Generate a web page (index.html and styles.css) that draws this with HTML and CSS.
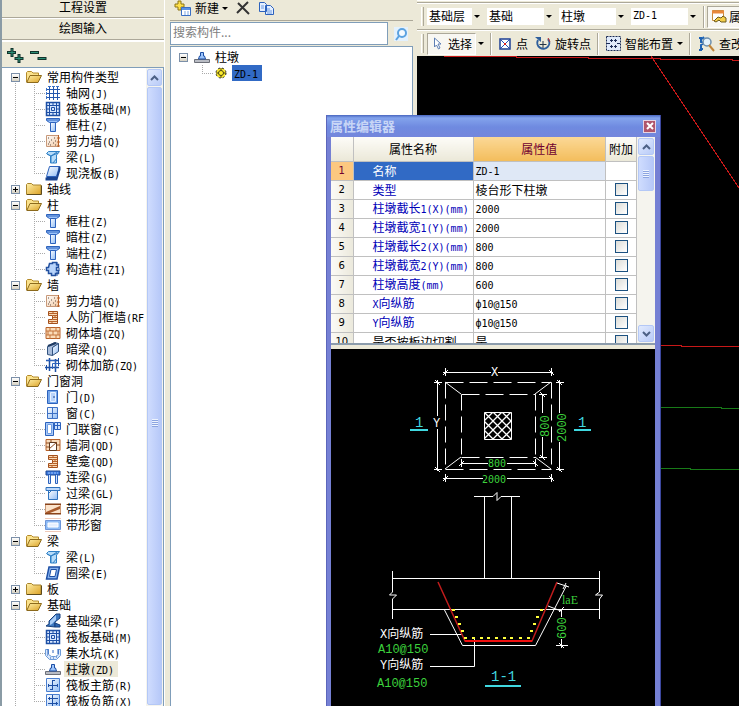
FILE: index.html
```html
<!DOCTYPE html>
<html lang="zh-CN">
<head>
    <meta charset="UTF-8">
    <meta name="viewport" content="width=device-width, initial-scale=1.0">
    <title>绘图输入</title>
    <link rel="stylesheet" href="styles.css">
</head>
<body>

    <!-- icon set -->
    <svg class="defs" aria-hidden="true">
        <defs>
            <linearGradient id="gBlue" x1="0" y1="0" x2="1" y2="1">
                <stop offset="0" stop-color="#fff"/><stop offset="1" stop-color="#8fbcf5"/>
            </linearGradient>
            <linearGradient id="gGold" x1="0" y1="0" x2="1" y2="1">
                <stop offset="0" stop-color="#fff0a8"/><stop offset="1" stop-color="#dca226"/>
            </linearGradient>
            <linearGradient id="gClay" x1="0" y1="0" x2="1" y2="1">
                <stop offset="0" stop-color="#fff"/><stop offset="1" stop-color="#f3c8a0"/>
            </linearGradient>
        </defs>
        <symbol id="folder" viewBox="0 0 16 16">
            <path d="M.5 13.500V3.500l1-1h4l1.500 1.500h8v9.500z" fill="url(#gGold)" stroke="#a8842c"/>
            <path d="M1 13.500h14.500V4.500" fill="none" stroke="#5d4a1c"/>
        </symbol>
        <symbol id="open" viewBox="0 0 16 16">
            <path d="M.5 13V3.500l1-1h4L7 4h5.500v3" fill="#fbe28c" stroke="#b48a2a"/>
            <path d="M.8 13.500L4 6.500h11.500l-3.500 7z" fill="url(#gGold)" stroke="#8c6a1c"/>
        </symbol>
        <symbol id="grid" viewBox="0 0 16 16">
            <path d="M4.500 1v14M8.500 1v14M12.500 1v14M1 4.500h14M1 8.500h14M1 12.500h14" stroke="#2457ad" fill="none"/>
            <path d="M3 1.500h3M7 1.500h3M11 1.500h3M1.500 3v3M1.500 7v3M1.500 11v3" stroke="#3d73c8" fill="none"/>
        </symbol>
        <symbol id="raft" viewBox="0 0 16 16">
            <path d="M1.500 1.500h13v13h-13z" fill="#d8e8ff" stroke="#1d4fa5" stroke-width="1.500"/>
            <path d="M4.500 2v12M11.500 2v12M2 4.500h12M2 11.500h12M6.500 6.500h3v3h-3z" stroke="#1d4fa5" fill="none"/>
            <path d="M8 2v2M8 12v2M2 8h2M12 8h2" stroke="#1d4fa5"/>
        </symbol>
        <symbol id="column" viewBox="0 0 16 16">
            <path d="M1.500 1.500h13v2l-3 2h-7l-3-2z" fill="#9cc4fa" stroke="#2c62bd"/>
            <path d="M5.500 5.500h5v9h-5z" fill="url(#gBlue)" stroke="#2c62bd"/>
            <path d="M2 3h12" stroke="#2c62bd"/>
        </symbol>
        <symbol id="wall" viewBox="0 0 16 16">
            <path d="M1.500 2.500h12v11h-12z" fill="url(#gClay)" stroke="#c89878"/>
            <path d="M13.500 2v12M12 5h3M12 9h3M12 13h3" stroke="#b86028"/>
            <path d="M3 5h1M6 7h1M9 5h1M4 9h1M8 10h1M5 12h1M10 8h1M10 12h1M3 11h1" stroke="#5c4b40"/>
        </symbol>
        <symbol id="beam" viewBox="0 0 16 16">
            <path d="M1.500 4.500l2-2h11l-2 2.500-1 1v8h-6v-7z" fill="#b6dcfa" stroke="#2f80c5"/>
            <path d="M2 5l4 2 6-4M6 14V7l7-3M8 14l4-5" fill="none" stroke="#2f80c5"/>
        </symbol>
        <symbol id="slab" viewBox="0 0 16 16">
            <path d="M4.500 1.500h10l-3 10h-10z" fill="url(#gBlue)" stroke="#2c62bd"/>
            <path d="M1.500 12.500v2h10l3-10v-3M1.500 13h10" fill="none" stroke="#184492" stroke-width="2"/>
        </symbol>
        <symbol id="strcol" viewBox="0 0 16 16">
            <path d="M4.500 2.500h3v-1h4v2h2v3h-2v3h2v3h-3v2h-4v-2h-3v-3h-2v-3h2z" fill="#b8d4fb" stroke="#22509f" stroke-width="1.500"/>
            <path d="M12 1v4M14 7v3M12 11v4" stroke="#22509f"/>
        </symbol>
        <symbol id="niche" viewBox="0 0 16 16">
            <path d="M3.500 2.500h9v12h-9v-4h4v-4h-4z" fill="#f9d9b4" stroke="#a5501c"/>
            <path d="M4 4.500h8M8 6.500h4M8 8.500h4M8 10.500h4M4 12.500h8M8 3v2M10 6v3M7 12v2" stroke="#b8622a"/>
        </symbol>
        <symbol id="brick" viewBox="0 0 16 16">
            <path d="M1 2.500h14v11H1z" fill="#fbdcb8" stroke="#b8622a"/>
            <path d="M1 6h14M1 10h14M5 2v4M11 2v4M8 6v4M3 6v4M13 6v4M5 10v4M11 10v4" stroke="#c4743c"/>
        </symbol>
        <symbol id="hidden" viewBox="0 0 16 16">
            <path d="M2.500 5.500l7-4 4 1-6 4v8l-5-1z" fill="#a9bddb" stroke="#31527f"/>
            <path d="M7.500 6.500l6-4v8l-6 4z" fill="url(#gBlue)" stroke="#31527f"/>
            <path d="M3 5l8-3" stroke="#1f3b63" stroke-width="2"/>
        </symbol>
        <symbol id="rebar" viewBox="0 0 16 16">
            <path d="M1 3.500h13M0 10.500h14M4.500 1v13M10.500 2v13" stroke="#1d4fa5" stroke-width="1.500" fill="none"/>
            <path d="M1.500 3.500h9v8M7.500 12V6.500h8" fill="none" stroke="#2c62bd"/>
            <path d="M13.500 1v8M1.500 8v5" stroke="#1d4fa5"/>
        </symbol>
        <symbol id="door" viewBox="0 0 16 16">
            <path d="M2.500 1.500h10v13h-10z" fill="#75a6ea" stroke="#2c62bd"/>
            <path d="M5.500 3.500h5v9h-5z" fill="#b9d4fb" stroke="#e8f1ff"/>
            <path d="M8 8h2" stroke="#184492"/>
        </symbol>
        <symbol id="window" viewBox="0 0 16 16">
            <path d="M2.500 2.500h10v11h-10z" fill="url(#gBlue)" stroke="#3d70c4"/>
            <path d="M7.500 2v12M3 8.500h10" stroke="#3d70c4"/>
        </symbol>
        <symbol id="doorwin" viewBox="0 0 16 16">
            <path d="M.5 1.500h8v13h-8z" fill="#a9c9f7" stroke="#2c62bd"/>
            <path d="M2.500 3.500h4v9h-4z" fill="#fff" stroke="#6f9de2"/>
            <path d="M9.500 1.500h6v7h-6zM12.500 1v7M9 4.500h7" fill="#cfe3ff" stroke="#2c62bd"/>
        </symbol>
        <symbol id="hole" viewBox="0 0 16 16">
            <path d="M1 2.500h14v11H1z" fill="#f8dcbd" stroke="#b8622a"/>
            <path d="M4.500 5.500h7v8h-7z" fill="#fff" stroke="#5d3a20"/>
            <path d="M4 12l8-7M1 6h3M12 8h3M1 10h3M6 3v2" stroke="#8e4a1e"/>
        </symbol>
        <symbol id="link" viewBox="0 0 16 16">
            <path d="M1 2h14v4H1z" fill="#3d7ae0" stroke="#184492"/>
            <path d="M3.500 6v8.500h2V6M10.500 6v8.500h2V6" fill="#cfe3ff" stroke="#2c62bd"/>
            <path d="M3 4h10" stroke="#9cc4fa" stroke-dasharray="2 1"/>
        </symbol>
        <symbol id="lintel" viewBox="0 0 16 16">
            <path d="M1 2.500h14v3H1z" fill="#bcd8fb" stroke="#2f72bd"/>
            <path d="M3.500 5.500h9v9h-9z" fill="url(#gBlue)" stroke="#2f72bd"/>
            <path d="M3 9l4-4" stroke="#2f72bd"/>
        </symbol>
        <symbol id="striphole" viewBox="0 0 16 16">
            <path d="M0 3.500h16v9H0z" fill="#fbe3cb" stroke="#9c4c1c"/>
            <path d="M1 11l14-6v3L5 12H1z" fill="#a85a2c"/>
            <path d="M0 3h16M0 13h16" stroke="#7c3a14"/>
        </symbol>
        <symbol id="stripwin" viewBox="0 0 16 16">
            <path d="M.5 3.500h15v9H.5z" fill="#8fbcf5" stroke="#6c95d8"/>
            <path d="M3 6h10v4H3z" fill="#e6f0ff" stroke="#fff"/>
            <path d="M0 1.500h16M0 14.500h16" stroke="#efc9b8"/>
        </symbol>
        <symbol id="ring" viewBox="0 0 16 16">
            <path d="M4 2h10.500l-2.500 12H1.500z" fill="#86b2ee" stroke="#1d4fa5" stroke-width="1.500"/>
            <path d="M6 4.500h5.500l-1.500 7H4.500z" fill="#fff" stroke="#1d4fa5"/>
        </symbol>
        <symbol id="fbeam" viewBox="0 0 16 16">
            <path d="M1 13l3-2V8l7-7h4v4l-5 4v5z" fill="#3d78c0" stroke="#163f7d"/>
            <path d="M5 12V8l6-6v5l-4 4z" fill="#a9cdf7"/>
            <path d="M10 10l5 2v2h-5z" fill="#2d68b4" stroke="#163f7d"/>
        </symbol>
        <symbol id="pit" viewBox="0 0 16 16">
            <path d="M.5 4.500h3v5l3 2h4l3-2v-5h2v6l-4 4h-7l-4-4z" fill="#d9e7fb" stroke="#6f9cd8"/>
            <path d="M3 4v5M13 4v5M5 13h1M8 13h1M11 12h1M2 10h1M8 5v3" stroke="#2c62bd"/>
        </symbol>
        <symbol id="pier" viewBox="0 0 16 16">
            <path d="M.5 10.500h15v3H.5z" fill="#b9bcc4" stroke="#6c6f78"/>
            <path d="M4.500 10l1-3h1V3.500h3V7h1l1 3z" fill="#9cc4fa" stroke="#1d4fa5"/>
        </symbol>
        <symbol id="mainbar" viewBox="0 0 16 16">
            <path d="M1.500 1.500h13v13h-13z" fill="url(#gBlue)" stroke="#4a7fd0"/>
            <path d="M7.500 3v10M3 8.500h10M3.500 7v3M12.500 7v3M7 3.500h3M5 12.500h3" stroke="#1d4fa5" fill="none"/>
        </symbol>
        <symbol id="negbar" viewBox="0 0 16 16">
            <path d="M1.500 1.500h13v13h-13z" fill="url(#gBlue)" stroke="#4a7fd0"/>
            <path d="M7.500 2v12M3 5.500h10M3 10.500h10M4.500 4v3M11.500 9v3" stroke="#1d4fa5" fill="none"/>
        </symbol>
    </svg>

    <aside class="sidebar">
        <button class="bar">工程设置</button>
        <button class="bar second">绘图输入</button>
        <div class="tools">
            <button class="plain" aria-label="展开全部">
                <svg width="17" height="16" viewBox="0 0 17 16"><path d="M5 0v9M0 4.500h9M12 6v9M7.500 10.500h9" stroke="#12332c" stroke-width="3"/><path d="M5 1v7M1 4.500h7M12 7v7M8.500 10.500h7" stroke="#2b8f75"/></svg>
            </button>
            <button class="plain" aria-label="折叠全部">
                <svg width="17" height="16" viewBox="0 0 17 16"><path d="M0 4.500h9M7.500 10.500h9" stroke="#12332c" stroke-width="3"/><path d="M1 4.500h7M8.500 10.500h7" stroke="#2b8f75"/></svg>
            </button>
        </div>
        <div class="treebox">
            <ul class="tree">
                <li>
                    <div class="group"><button class="toggle" aria-label="折叠"></button><svg><use href="#open"/></svg>常用构件类型</div>
                    <ul>
                        <li><svg><use href="#grid"/></svg><span>轴网<i>(J)</i></span></li>
                        <li><svg><use href="#raft"/></svg><span>筏板基础<i>(M)</i></span></li>
                        <li><svg><use href="#column"/></svg><span>框柱<i>(Z)</i></span></li>
                        <li><svg><use href="#wall"/></svg><span>剪力墙<i>(Q)</i></span></li>
                        <li><svg><use href="#beam"/></svg><span>梁<i>(L)</i></span></li>
                        <li><svg><use href="#slab"/></svg><span>现浇板<i>(B)</i></span></li>
                    </ul>
                </li>
                <li>
                    <div class="group"><button class="toggle closed" aria-label="展开"></button><svg><use href="#folder"/></svg>轴线</div>
                </li>
                <li>
                    <div class="group"><button class="toggle" aria-label="折叠"></button><svg><use href="#open"/></svg>柱</div>
                    <ul>
                        <li><svg><use href="#column"/></svg><span>框柱<i>(Z)</i></span></li>
                        <li><svg><use href="#column"/></svg><span>暗柱<i>(Z)</i></span></li>
                        <li><svg><use href="#column"/></svg><span>端柱<i>(Z)</i></span></li>
                        <li><svg><use href="#strcol"/></svg><span>构造柱<i>(Z1)</i></span></li>
                    </ul>
                </li>
                <li>
                    <div class="group"><button class="toggle" aria-label="折叠"></button><svg><use href="#open"/></svg>墙</div>
                    <ul>
                        <li><svg><use href="#wall"/></svg><span>剪力墙<i>(Q)</i></span></li>
                        <li><svg><use href="#niche"/></svg><span>人防门框墙<i>(RF</i></span></li>
                        <li><svg><use href="#brick"/></svg><span>砌体墙<i>(ZQ)</i></span></li>
                        <li><svg><use href="#hidden"/></svg><span>暗梁<i>(Q)</i></span></li>
                        <li><svg><use href="#rebar"/></svg><span>砌体加筋<i>(ZQ)</i></span></li>
                    </ul>
                </li>
                <li>
                    <div class="group"><button class="toggle" aria-label="折叠"></button><svg><use href="#open"/></svg>门窗洞</div>
                    <ul>
                        <li><svg><use href="#door"/></svg><span>门<i>(D)</i></span></li>
                        <li><svg><use href="#window"/></svg><span>窗<i>(C)</i></span></li>
                        <li><svg><use href="#doorwin"/></svg><span>门联窗<i>(C)</i></span></li>
                        <li><svg><use href="#hole"/></svg><span>墙洞<i>(QD)</i></span></li>
                        <li><svg><use href="#niche"/></svg><span>壁龛<i>(QD)</i></span></li>
                        <li><svg><use href="#link"/></svg><span>连梁<i>(G)</i></span></li>
                        <li><svg><use href="#lintel"/></svg><span>过梁<i>(GL)</i></span></li>
                        <li><svg><use href="#striphole"/></svg><span>带形洞</span></li>
                        <li><svg><use href="#stripwin"/></svg><span>带形窗</span></li>
                    </ul>
                </li>
                <li>
                    <div class="group"><button class="toggle" aria-label="折叠"></button><svg><use href="#open"/></svg>梁</div>
                    <ul>
                        <li><svg><use href="#beam"/></svg><span>梁<i>(L)</i></span></li>
                        <li><svg><use href="#ring"/></svg><span>圈梁<i>(E)</i></span></li>
                    </ul>
                </li>
                <li>
                    <div class="group"><button class="toggle closed" aria-label="展开"></button><svg><use href="#folder"/></svg>板</div>
                </li>
                <li>
                    <div class="group"><button class="toggle" aria-label="折叠"></button><svg><use href="#open"/></svg>基础</div>
                    <ul>
                        <li><svg><use href="#fbeam"/></svg><span>基础梁<i>(F)</i></span></li>
                        <li><svg><use href="#raft"/></svg><span>筏板基础<i>(M)</i></span></li>
                        <li><svg><use href="#pit"/></svg><span>集水坑<i>(K)</i></span></li>
                        <li><svg><use href="#pier"/></svg><span class="current">柱墩<i>(ZD)</i></span></li>
                        <li><svg><use href="#mainbar"/></svg><span>筏板主筋<i>(R)</i></span></li>
                        <li><svg><use href="#negbar"/></svg><span>筏板负筋<i>(X)</i></span></li>
                    </ul>
                </li>
            </ul>
            <div class="scroll">
                <button class="arrow" aria-label="向上"><svg width="9" height="6" viewBox="0 0 9 6"><path d="M1 5l3.500-3.500L8 5" fill="none" stroke="#4d6185" stroke-width="2"/></svg></button>
                <div class="thumb tall"><div class="grip"></div></div>
            </div>
        </div>
    </aside>

    <section class="parts">
        <div class="newbar">
            <button class="plain">
                <svg width="18" height="17" viewBox="0 0 18 17"><path d="M4 1h3v3h3v3H7v3H4V7H1V4h3z" fill="#ffe14a" stroke="#8c7414"/><path d="M7.500 7.500h9v8h-9z" fill="#fff" stroke="#3a6fc4"/><path d="M8 9h8" stroke="#5a92e6" stroke-width="2"/><path d="M10 12h2M13 12h2M10 14h2M13 14h2" stroke="#7fa9e4"/></svg>
                新建<span class="caret"></span>
            </button>
            <button class="plain" aria-label="删除"><svg width="14" height="14" viewBox="0 0 14 14"><path d="M2 2l11 11M12 1L1 12" stroke="#333" stroke-width="2" fill="none"/></svg></button>
            <button class="plain" aria-label="复制"><svg width="17" height="14" viewBox="0 0 17 14"><path d="M1.500 1.500h5l2 2v7h-7zM7.500 4.500h5l3 3v6h-8z" fill="#e4efff" stroke="#2c62bd"/><path d="M3 5h3M3 7h3M9 8h3M9 10h5M9 12h5" stroke="#6d9be2"/></svg></button>
        </div>
        <div class="search">
            <input type="text" placeholder="搜索构件..." aria-label="搜索构件">
            <button class="plain" aria-label="搜索"><svg width="14" height="14" viewBox="0 0 14 14"><path d="M0 0h14v14H0z" fill="#e3f1fd"/><circle cx="8" cy="6" r="4" fill="#f4faff" stroke="#5ba2e0" stroke-width="2"/><path d="M5 9l-3 4" stroke="#5ba2e0" stroke-width="2"/></svg></button>
        </div>
        <div class="partlist">
            <ul class="tree">
                <li>
                    <div class="group"><button class="toggle" aria-label="折叠"></button><svg><use href="#pier"/></svg>柱墩</div>
                    <ul>
                        <li><svg viewBox="0 0 16 16"><circle cx="6" cy="8" r="5" fill="#ffee2e"/><circle cx="6" cy="8" r="5" fill="none" stroke="#222" stroke-dasharray="2 2"/><path d="M6 3v10M1 8h10" stroke="#4a4410"/><circle cx="6" cy="8" r="2.500" fill="#ffee2e" stroke="#4a4410"/></svg><span class="picked"><i>ZD-1</i></span></li>
                    </ul>
                </li>
            </ul>
        </div>
    </section>

    <main class="work">
        <div class="row first"></div>
        <div class="row">
            <div class="handle"></div>
            <div class="pick short"><select aria-label="楼层"><option>基础层</option></select><span class="caret"></span></div>
            <div class="pick"><select aria-label="构件大类"><option>基础</option></select><span class="caret"></span></div>
            <div class="pick"><select aria-label="构件类型"><option>柱墩</option></select><span class="caret"></span></div>
            <div class="pick"><select class="en" aria-label="构件"><option>ZD-1</option></select><span class="caret"></span></div>
            <div class="line"></div>
            <button class="plain pressed"><svg width="16" height="16" viewBox="0 0 16 16"><path d="M1.500 1.500h11v10h-11z" fill="#fff" stroke="#c48c3c"/><path d="M1 3h12" stroke="#e8883c" stroke-width="3"/><path d="M3 12l4-4 3 1 2-2 3 2v4h-5l-2-2-3 2z" fill="#f4cf4a" stroke="#6c5a1c"/></svg>属性</button>
        </div>
        <div class="row">
            <div class="handle"></div>
            <button class="plain pressed select"><svg width="10" height="13" viewBox="0 0 10 13"><path d="M1.500 1v9l2-2 2 4 1.500-1-2-4H8z" fill="#fff" stroke="#5e7fb4"/></svg>选择</button><span class="caret"></span>
            <div class="line"></div>
            <button class="plain point"><svg width="12" height="12" viewBox="0 0 12 12"><path d="M1 1h10v10H1z" fill="#fff" stroke="#1d3f94" stroke-width="1.500"/><path d="M2 2l8 8M10 2l-8 8" stroke="#2c50b4"/><path d="M5 5h2v2H5z" fill="#d82020"/></svg>点</button>
            <button class="plain"><svg width="16" height="16" viewBox="0 0 16 16"><path d="M3 4a6 6 0 1 0 10-1" fill="none" stroke="#2f5f9c" stroke-width="2"/><path d="M0 1h6v5z" fill="#2f5f9c"/><path d="M8 5v7M4.500 8.500h7" stroke="#234"/><path d="M13 2l2 4" stroke="#c03030"/></svg>旋转点</button>
            <div class="line"></div>
            <button class="plain"><svg width="15" height="15" viewBox="0 0 15 15"><path d="M.5.5h14v14H.5z" fill="#dfeafb" stroke="#1a2b55" stroke-dasharray="2 1"/><path d="M5.500 3v3M4 4.500h3M9.500 3v3M8 4.500h3M5.500 9v3M4 10.500h3M9.500 9v3M8 10.500h3M1 7.500h3M11 7.500h3" stroke="#1a2b55"/></svg>智能布置<span class="caret"></span></button>
            <div class="line"></div>
            <button class="plain"><svg width="17" height="16" viewBox="0 0 17 16"><path d="M1 2h2v4l3 1-3 2v5H1M4 3l2-2M5 13H3" fill="none" stroke="#1d62b4" stroke-width="2"/><circle cx="9" cy="6" r="4" fill="#e4f2fc" stroke="#6c8fae" stroke-width="1.500"/><path d="M11 9l5 6" stroke="#c08438" stroke-width="2"/></svg>查改标注</button>
        </div>
        <div class="canvas">
            <svg width="100%" height="100%">
                <g fill="none" stroke="#c81818" shape-rendering="crispEdges">
                    <path d="M27 .5h72v1h72v1h72v1h72v1h300"/>
                    <path d="M234 0l88 132 200 300"/>
                    <path d="M244 289.500h20v1h400"/>
                </g>
                <g fill="none" stroke="#187a18" shape-rendering="crispEdges">
                    <path d="M244 351.500h60v1h400"/>
                    <path d="M244 412.500h29v1h400"/>
                </g>
            </svg>
        </div>
    </main>

    <!-- floating property editor -->
    <section class="editor">
        <header><h1>属性编辑器</h1><button class="close" aria-label="关闭"><svg width="8" height="8" viewBox="0 0 8 8"><path d="M1 1l6 6M7 1L1 7" stroke="#fff" stroke-width="2"/></svg></button></header>
        <div class="props">
            <div class="clip">
                <table>
                    <thead>
                        <tr><th class="num"></th><th class="name">属性名称</th><th class="value">属性值</th><th class="extra">附加</th></tr>
                    </thead>
                    <tbody>
                        <tr class="active"><th>1</th><td>名称</td><td><i>ZD-1</i></td><td></td></tr>
                        <tr><th>2</th><td>类型</td><td>棱台形下柱墩</td><td><input type="checkbox" aria-label="类型 附加"></td></tr>
                        <tr><th>3</th><td>柱墩截长<i>1(X)(mm)</i></td><td><i>2000</i></td><td><input type="checkbox" aria-label="截长1 附加"></td></tr>
                        <tr><th>4</th><td>柱墩截宽<i>1(Y)(mm)</i></td><td><i>2000</i></td><td><input type="checkbox" aria-label="截宽1 附加"></td></tr>
                        <tr><th>5</th><td>柱墩截长<i>2(X)(mm)</i></td><td><i>800</i></td><td><input type="checkbox" aria-label="截长2 附加"></td></tr>
                        <tr><th>6</th><td>柱墩截宽<i>2(Y)(mm)</i></td><td><i>800</i></td><td><input type="checkbox" aria-label="截宽2 附加"></td></tr>
                        <tr><th>7</th><td>柱墩高度<i>(mm)</i></td><td><i>600</i></td><td><input type="checkbox" aria-label="高度 附加"></td></tr>
                        <tr><th>8</th><td><i>X</i>向纵筋</td><td><i>ф10@150</i></td><td><input type="checkbox" aria-label="X向纵筋 附加"></td></tr>
                        <tr><th>9</th><td><i>Y</i>向纵筋</td><td><i>ф10@150</i></td><td><input type="checkbox" aria-label="Y向纵筋 附加"></td></tr>
                        <tr class="common"><th>10</th><td>是否按板边切割</td><td>是</td><td><input type="checkbox" aria-label="切割 附加"></td></tr>
                    </tbody>
                </table>
            </div>
            <div class="scroll wide">
                <button class="arrow" aria-label="向上"><svg width="9" height="6" viewBox="0 0 9 6"><path d="M1 5l3.500-3.500L8 5" fill="none" stroke="#4d6185" stroke-width="2"/></svg></button>
                <div class="thumb"><div class="grip"></div></div>
                <button class="arrow down" aria-label="向下"><svg width="9" height="6" viewBox="0 0 9 6"><path d="M1 1l3.500 3.500L8 1" fill="none" stroke="#4d6185" stroke-width="2"/></svg></button>
            </div>
        </div>
        <div class="sketch">
            <svg width="325" height="357" viewBox="331 349 325 357">
                <defs>
                    <pattern id="hatch" width="9" height="9" patternUnits="userSpaceOnUse" x="484" y="412">
                        <path d="M0 0l9 9M9 0l-9 9" stroke="#fff" stroke-width="1.300"/>
                    </pattern>
                </defs>
                <!-- plan -->
                <g fill="none" stroke="#fff">
                    <path d="M445.500 382.500h106M445.500 469.500h106" stroke-dasharray="18 6"/>
                    <path d="M445.500 382.500v87M551.500 382.500v87" stroke-dasharray="16 6"/>
                    <path d="M461.500 394.500h74M461.500 457.500h74" stroke-dasharray="18 6"/>
                    <path d="M461.500 394.500v63M535.500 394.500v63" stroke-dasharray="16 6"/>
                    <path d="M445 382l16 12M551 382l-16 12M445 469l16-12M551 469l-16-12"/>
                    <path d="M484.500 412.500h27v27h-27z" fill="url(#hatch)"/>
                    <path d="M443 372.500h48M498 372.500h55M445.500 368v8M551.500 368v8M443 375l5-5M549 370l5 5"/>
                    <path d="M437.500 380v36M437.500 429v42M434 382.500h8M434 469.500h8M435 380l5 5M435 467l5 5"/>
                    <path d="M559.500 380v33M559.500 442v29M556 382.500h8M556 469.500h8M557 380l5 5M557 467l5 5"/>
                    <path d="M542.500 394v19M542.500 437v20M539 394.500h8M539 457.500h8M540 392l5 5M540 455l5 5"/>
                    <path d="M461 463.500h27M507 463.500h28M461.500 459v8M535.500 459v8M459 466l5-5M533 461l5 5"/>
                    <path d="M443 478.500h40M507 478.500h46M445.500 474v8M551.500 474v8M443 481l5-5M549 476l5 5"/>
                </g>
                <g class="cyan"><text x="415" y="427">1</text><text x="578" y="427">1</text><path d="M410 430h18M574 430h17"/></g>
                <g class="white"><text x="491" y="376">X</text><text x="433" y="427">Y</text></g>
                <g class="green small"><text x="488" y="467">800</text><text x="482" y="483">2000</text></g>
                <g class="green"><text transform="translate(549 437) rotate(-90)">800</text><text transform="translate(566 442) rotate(-90)">2000</text></g>

                <!-- section 1-1 -->
                <g fill="none" stroke="#fff">
                    <path d="M474 496.500h19l4-4v8l4-4h19M484.500 497v81M511.500 497v81M392 578.500h207M392 609.500h207"/>
                    <path d="M392.500 571v21l-3 3h7l-4 4v20M599.500 571v21l-4 3h7l-3 4v20"/>
                    <path d="M444.500 610l18 35.500h73l31-60M557 583l12 4M548 606l13 5M566 583l-3 6"/>
                    <path d="M561.500 609v8M561.500 639v9M556 645.500h12M559 643l5 5M559 612l5-5"/>
                    <path d="M430 634.500h32M430 666.500h44.500v-28"/>
                </g>
                <path d="M438 582l27 59h67l25-59" fill="none" stroke="#c01c1c" stroke-width="1.500"/>
                <path d="M465 641h67" stroke="#f01010" stroke-width="2"/>
                <g stroke="#ffff3c" stroke-width="2">
                    <path d="M452 610h3M455 617h3M458 624h3M461 631h3M464 638h3M472 638h3M480 638h3M487 638h3M495 638h3M503 638h3M510 638h3M519 638h3M527 638h3M530 631h3M533 624h3M536 617h3M540 610h3"/>
                </g>
                <g class="white"><text x="380" y="638">X向纵筋</text><text x="380" y="669">Y向纵筋</text></g>
                <g class="green"><text x="378" y="653">A10@150</text><text x="377" y="687">A10@150</text><text class="serif" x="562" y="604">laE</text><text transform="translate(566 639) rotate(-90)">600</text></g>
                <g class="cyan"><text x="491" y="681">1-1</text><path d="M485 686h36"/></g>
            </svg>
        </div>
    </section>

</body>
</html>
```
FILE: styles.css
```css
* {
    box-sizing: border-box;
}
body {
    margin: 0;
    height: 100vh;
    display: flex;
    overflow: hidden;
    position: relative;
    background-color: #ece9d8;
    color: #000;
    font-family: "Noto Sans CJK SC", sans-serif;
    font-size: 12px;
    line-height: 16px;
}
button, input, select {
    font: inherit;
    color: inherit;
    margin: 0;
    padding: 0;
    border-radius: 0;
}
ul {
    list-style: none;
    margin: 0;
    padding: 0;
}
i {
    font-family: "DejaVu Sans Mono", monospace;
    font-size: 10px;
    font-style: normal;
}
.defs {
    position: absolute;
    width: 0;
    height: 0;
}
.plain {
    border: none;
    background: none;
    display: flex;
    align-items: center;
    white-space: nowrap;
    flex-shrink: 0;
}
.caret {
    border: 3px solid transparent;
    border-top-color: #000;
    border-bottom: none;
    flex-shrink: 0;
}

/* left panel */
.sidebar {
    width: 165px;
    flex-shrink: 0;
    display: flex;
    flex-direction: column;
    border-left: 2px solid #8a9ba5;
    border-right: 1px solid #fff;
}
.bar {
    height: 18px;
    flex-shrink: 0;
    border: none;
    border-bottom: 1px solid #aca899;
    background-color: #ece9d8;
    line-height: 14px;
    padding-bottom: 3px;
}
.second {
    height: 22px;
    border-top: 1px solid #fff;
    padding-bottom: 2px;
}
.tools {
    display: flex;
    gap: 6px;
    height: 27px;
    flex-shrink: 0;
    padding: 6px 5px 0;
    border-top: 2px solid #fff;
    align-items: flex-start;
}
.treebox {
    flex: 1;
    min-height: 0;
    display: flex;
    background-color: #fff;
    border-top: 1px solid #7f9db9;
    border-right: 1px solid #7f9db9;
    overflow: hidden;
}
.tree {
    flex: 1;
    min-width: 0;
    margin-top: 1px;
    overflow: hidden;
    white-space: nowrap;
    background: repeating-linear-gradient(#aaa 0 1px, transparent 1px 2px) 13px 8px / 1px 100% no-repeat;
}
.tree svg {
    width: 16px;
    height: 16px;
    flex-shrink: 0;
}
.group {
    display: flex;
    align-items: center;
    height: 16px;
    padding-left: 9px;
}
.group svg {
    margin: 0 5px 0 6px;
}
.toggle {
    width: 9px;
    height: 9px;
    border: 1px solid #7b8fa8;
    background: linear-gradient(#000, #000) 1px 3px / 5px 1px no-repeat, linear-gradient(#fff, #d6d1c2);
}
.toggle.closed {
    background: linear-gradient(#000, #000) 1px 3px / 5px 1px no-repeat, linear-gradient(#000, #000) 3px 1px / 1px 5px no-repeat, linear-gradient(#fff, #d6d1c2);
}
.tree ul li {
    display: flex;
    height: 16px;
    margin-left: 32px;
    padding-left: 11px;
    background: repeating-linear-gradient(#aaa 0 1px, transparent 1px 2px) 0 0 / 1px 100% no-repeat, repeating-linear-gradient(90deg, #aaa 0 1px, transparent 1px 2px) 0 8px / 11px 1px no-repeat;
}
.tree ul li:last-child {
    background-size: 1px 8px, 11px 1px;
}
.tree li span {
    margin-left: 3px;
    padding: 0 4px 0 2px;
}
.tree .current {
    background-color: #ece9d8;
}

/* scroll bars */
.scroll {
    width: 17px;
    flex-shrink: 0;
    display: flex;
    flex-direction: column;
    padding: 1px;
    background-color: #f5f4ee;
}
.wide {
    width: 18px;
}
.arrow {
    height: 17px;
    flex-shrink: 0;
    display: flex;
    align-items: center;
    justify-content: center;
    border: 1px solid #b4c8f6;
    border-radius: 2px;
    background: linear-gradient(135deg, #e1eafe, #b9cbf8);
}
.down {
    margin-top: auto;
}
.thumb {
    height: 35px;
    margin-top: 1px;
    display: flex;
    align-items: center;
    justify-content: center;
    border: 1px solid #b4c8f6;
    border-radius: 2px;
    background: linear-gradient(90deg, #cfdcfe, #b6c8f8);
}
.tall {
    height: auto;
    flex: 1;
    padding-top: 54px;
}
.grip {
    width: 6px;
    height: 8px;
    background: repeating-linear-gradient(#eef4fe 0 1px, #8ca4e0 1px 2px);
}

/* component list */
.parts {
    width: 248px;
    flex-shrink: 0;
    display: flex;
    flex-direction: column;
    padding-left: 5px;
}
.newbar {
    display: flex;
    align-items: center;
    gap: 8px;
    height: 21px;
    padding: 0 4px 4px;
    flex-shrink: 0;
    border-bottom: 1px solid #aca899;
}
.newbar .plain {
    gap: 3px;
}
.search {
    display: flex;
    height: 26px;
    padding: 1px 0;
    flex-shrink: 0;
    border-bottom: 1px solid #7f9db9;
}
.search input {
    flex: 1;
    min-width: 0;
    border: 1px solid #7f9db9;
    background-color: #fff;
    padding: 0 2px 3px;
}
.search input::placeholder {
    color: #808080;
}
.search button {
    width: 25px;
    justify-content: center;
}
.partlist {
    flex: 1;
    background-color: #fff;
    border: 1px solid #7f9db9;
    border-width: 0 1px;
    padding-top: 1px;
}
.partlist .tree {
    background: none;
}
.partlist .group {
    padding-left: 8px;
}
.partlist .tree ul li {
    margin-left: 31px;
    padding-left: 13px;
}
.partlist .tree .picked {
    background-color: #316ac5;
    padding: 0 4px 0 2px;
    margin-left: 1px;
}

/* drawing area */
.work {
    flex: 1;
    min-width: 0;
    margin-left: 4px;
    display: flex;
    flex-direction: column;
}
.row {
    height: 27px;
    flex-shrink: 0;
    display: flex;
    align-items: center;
    overflow: hidden;
    padding-left: 4px;
    border-top: 1px solid #fff;
    border-bottom: 1px solid #aca899;
}
.first {
    height: 3px;
}
.handle {
    width: 3px;
    height: 19px;
    flex-shrink: 0;
    margin-right: 3px;
    border-left: 1px solid #fff;
    border-right: 1px solid #aca899;
}
.line {
    width: 2px;
    height: 22px;
    flex-shrink: 0;
    margin: 0 7px 0 6px;
    border-left: 1px solid #aca899;
    border-right: 1px solid #fff;
}
.pick {
    width: 67px;
    height: 17px;
    flex-shrink: 0;
    margin-right: 5px;
    display: flex;
    align-items: center;
    padding-right: 2px;
    background: linear-gradient(#ece9d8, #ece9d8) right / 10px 100% no-repeat, #fff;
}
.short {
    width: 55px;
}
.pick + .line {
    margin: 0 2px 0 0;
}
.pick select {
    flex: 1;
    min-width: 0;
    height: 17px;
    padding: 0 1px 2px 2px;
    border: none;
    appearance: none;
    background: none;
    line-height: 15px;
}
.pick .en {
    font-family: "DejaVu Sans Mono", monospace;
    font-size: 10px;
}
.row .plain {
    gap: 4px;
    height: 22px;
}
.row .pressed {
    padding: 0 3px;
    background-color: #f8f7f2;
    border: 1px solid #aca899;
    border-right-color: #fff;
    border-bottom-color: #fff;
    gap: 2px;
}
.row .select {
    gap: 5px;
    padding: 0 3px 0 5px;
    margin-right: 2px;
}
.row .point {
    gap: 5px;
    padding-right: 7px;
}
.canvas {
    flex: 1;
    min-height: 0;
    background-color: #000;
    margin-top: -1px;
}
.canvas svg {
    display: block;
}

/* property editor window */
.editor {
    position: absolute;
    left: 326px;
    top: 115px;
    bottom: 0;
    width: 335px;
    display: flex;
    flex-direction: column;
    padding: 0 5px;
    background-color: #7580d4;
    border-left: 1px solid #5c66bc;
    border-right: 1px solid #3c479e;
}
.editor header {
    display: flex;
    align-items: center;
    justify-content: space-between;
    height: 22px;
    flex-shrink: 0;
    margin: 0 -5px;
    padding: 0 4px 0 3px;
    background: linear-gradient(#4866c0, #83a3ec 3px, #6f8ae0 12px, #7486dc);
}
.editor h1 {
    margin: 0;
    font-size: 13px;
    line-height: 16px;
    color: #c8d6f6;
}
.close {
    width: 13px;
    height: 13px;
    display: flex;
    align-items: center;
    justify-content: center;
    border: 1px solid #e6d4e4;
    background-color: #b0566c;
}
.props {
    display: flex;
    height: 208px;
    flex-shrink: 0;
    margin-left: -1px;
    background-color: #fff;
    border-bottom: 2px solid #8c9cac;
}
.clip {
    flex: 1;
    min-width: 0;
    overflow: hidden;
}
table {
    width: 100%;
    table-layout: fixed;
    border-collapse: collapse;
}
th, td {
    height: 19px;
    padding: 0 2px;
    line-height: 16px;
    border-right: 1px solid #c0c0c0;
    border-bottom: 1px solid #c0c0c0;
    font-weight: normal;
    text-align: left;
    white-space: nowrap;
    overflow: hidden;
}
th {
    text-align: center;
    background: linear-gradient(90deg, #fbfaf6, #ebe9dc);
}
tbody th {
    font-family: "DejaVu Sans", sans-serif;
    font-size: 10px;
}
thead th {
    height: 24px;
    padding: 0;
    background: linear-gradient(#fdfcf8, #ebe8d8);
}
.num {
    width: 22px;
}
.name {
    width: 120px;
}
.extra {
    width: 31px;
}
thead .value {
    background: linear-gradient(#fbd896, #f3bd5c);
    color: #700030;
}
td:nth-child(2) {
    padding: 0 0 0 19px;
    color: #0000b8;
}
td:nth-child(4) {
    text-align: center;
}
.active th {
    background: #fcc880;
    color: #700030;
}
.active td:nth-child(2) {
    background-color: #316ac5;
    color: #fff;
}
.active td:nth-child(3) {
    background-color: #dfe8f6;
}
.common td:nth-child(2) {
    color: #000;
}
input[type="checkbox"] {
    appearance: none;
    display: block;
    width: 13px;
    height: 13px;
    margin: 0 auto;
    border: 1px solid #1c5180;
    background: linear-gradient(135deg, #dcdcd7, #fff);
}
.sketch {
    flex: 1;
    min-height: 0;
    margin-left: -1px;
    overflow: hidden;
    background-color: #000;
    border-top: 4px solid #ece9d8;
}
.sketch svg {
    display: block;
}
.sketch text {
    font-family: "Liberation Mono", "Noto Sans CJK SC", monospace;
    font-size: 12px;
}
.sketch .small text {
    font-family: "DejaVu Sans Mono", monospace;
    font-size: 10px;
}
.white {
    fill: #fff;
}
.green {
    fill: #3cd03c;
}
.sketch .serif {
    font-family: "Liberation Serif", serif;
}
.cyan {
    fill: #40d8e0;
    stroke: none;
}
.cyan path {
    stroke: #40d8e0;
    stroke-width: 2;
}
.sketch .cyan text {
    font-size: 14px;
}
```
